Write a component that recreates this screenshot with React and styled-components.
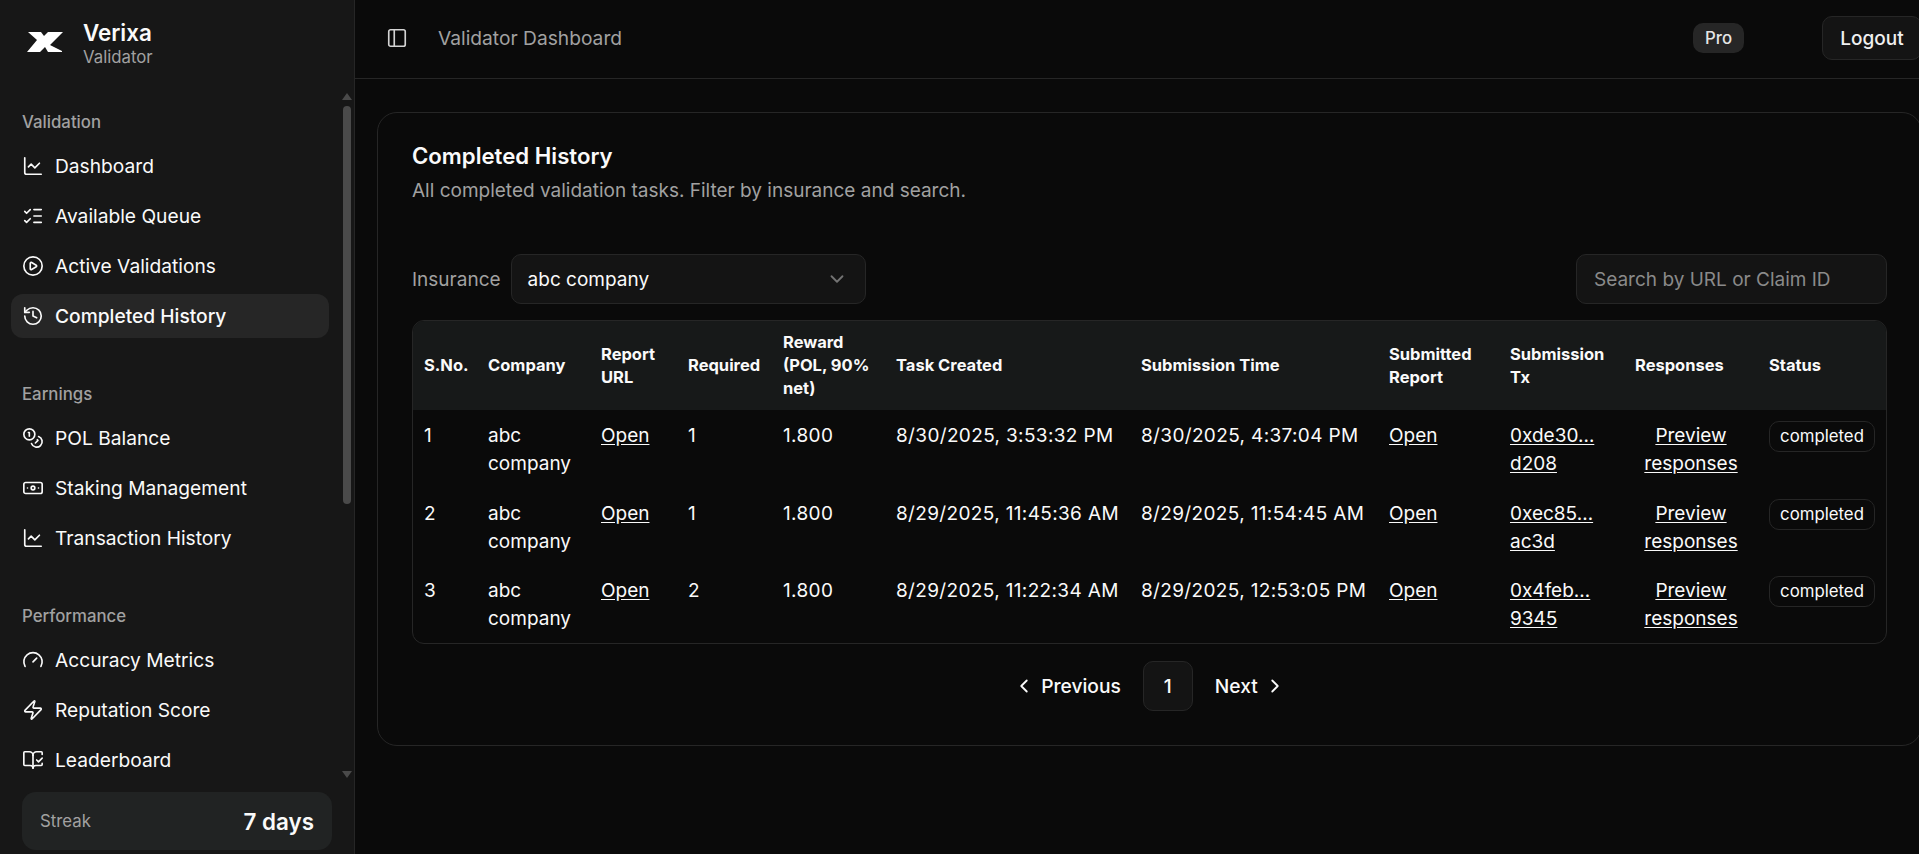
import styled, { createGlobalStyle } from "styled-components"
import {
    ChartLine,
    ListChecks,
    CirclePlay,
    History,
    Coins,
    Banknote,
    Gauge,
    Zap,
    BookOpenCheck,
    PanelLeft,
    ChevronDown,
    ChevronLeft,
    ChevronRight,
} from "lucide-react"

const GlobalStyle = createGlobalStyle`
    html, body {
        margin: 0;
        height: 100%;
        overflow: hidden;
        background: #0a0a0a;
    }
    * {
        box-sizing: border-box;
    }
    body {
        font-family: Inter, "Liberation Sans", sans-serif;
        color: #fafafa;
    }
`;

const Page = styled.div`
    display: flex;
    width: 1922px;
    height: 854px;
    background: #0a0a0a;
`;

const Sidebar = styled.aside`
    position: relative;
    flex: none;
    width: 355px;
    height: 854px;
    display: flex;
    flex-direction: column;
    background: #171717;
    border-right: 1px solid #262626;
`;
const Brand = styled.div`
    flex: none;
    height: 78px;
    padding: 16px 0 0 27px;
    display: flex;
    align-items: flex-start;
    gap: 20px;
`;
const LogoMark = styled.svg`
    flex: none;
    margin-top: 16px;
`;
const BrandText = styled.div`
    display: flex;
    flex-direction: column;
    padding-top: 3px;
`;
const BrandName = styled.div`
    font-size: 22.4px;
    line-height: 28px;
    font-weight: 600;
`;
const BrandRole = styled.div`
    font-size: 16.8px;
    line-height: 21px;
    color: #a1a1a1;
`;
const Nav = styled.nav`
    flex: 1;
    min-height: 0;
    overflow: hidden;
    margin-top: 22px;
    padding: 0 25px 0 11px;
`;
const Group = styled.div`
    display: flex;
    flex-direction: column;
    margin-bottom: 28px;
`;
const GroupLabel = styled.div`
    height: 44px;
    padding: 0 0 0 11px;
    display: flex;
    align-items: center;
    font-size: 16.8px;
    font-weight: 500;
    color: #a1a1a1;
`;
const NavItem = styled.a`
    flex: none;
    height: 44px;
    margin-bottom: 6px;
    padding: 0 11px;
    display: flex;
    align-items: center;
    gap: 11px;
    border-radius: 12px;
    font-size: 19.2px;
    font-weight: ${({ $active }) => ($active ? 500 : 400)};
    color: #fafafa;
    background: ${({ $active }) => ($active ? "#262626" : "transparent")};

    svg {
        flex: none;
    }
`;
const ScrollBar = styled.div`
    position: absolute;
    top: 93px;
    left: 342px;
    width: 10px;
    height: 685px;
    display: flex;
    flex-direction: column;
    align-items: center;
`;
const ScrollArrow = styled.div`
    flex: none;
    width: 0;
    height: 0;
    border-left: 5px solid transparent;
    border-right: 5px solid transparent;
    ${({ $down }) => ($down ? "border-top: 7px solid #4a4a4a;" : "border-bottom: 7px solid #4a4a4a;")}
`;
const ScrollThumb = styled.div`
    flex: none;
    width: 8px;
    height: 398px;
    margin-top: 6px;
    margin-bottom: auto;
    border-radius: 4px;
    background: #4a4a4a;
`;
const Streak = styled.div`
    flex: none;
    margin: 10px 22px 4px 22px;
    height: 58px;
    padding: 0 18px;
    display: flex;
    align-items: center;
    justify-content: space-between;
    border-radius: 14px;
    background: #212323;
`;
const StreakLabel = styled.div`
    font-size: 16.8px;
    color: #a1a1a1;
`;
const StreakValue = styled.div`
    font-size: 22.4px;
    font-weight: 600;
`;

const Main = styled.main`
    flex: 1;
    min-width: 0;
    display: flex;
    flex-direction: column;
`;
const Header = styled.header`
    flex: none;
    height: 79px;
    padding: 0 0 2px 31px;
    display: flex;
    align-items: center;
    border-bottom: 1px solid #262626;
    color: #a1a1a1;

    svg {
        color: #d4d4d4;
        flex: none;
    }
`;
const HeaderTitle = styled.div`
    margin-left: 30px;
    font-size: 19.2px;
    flex: 1;
`;
const ProBadge = styled.div`
    width: 51px;
    height: 30px;
    display: flex;
    align-items: center;
    justify-content: center;
    border-radius: 10px;
    background: #262626;
    font-size: 16.8px;
    font-weight: 500;
    color: #e5e5e5;
`;
const LogoutButton = styled.button`
    margin-left: 78px;
    width: 100px;
    height: 44px;
    padding: 0;
    border: 1px solid #262626;
    border-radius: 10px;
    background: #141414;
    color: #f0f0f0;
    font: 500 19px Inter, sans-serif;
`;

const Content = styled.div`
    padding: 33px 0 0 22px;
`;
const Card = styled.section`
    height: 634px;
    padding: 29px 34px 30px;
    border: 1px solid #262626;
    border-radius: 20px;
    background: #0a0a0a;
`;
const Title = styled.h2`
    margin: 0;
    font-size: 22.2px;
    line-height: 28px;
    font-weight: 600;
`;
const Desc = styled.div`
    margin-top: 7px;
    font-size: 19px;
    line-height: 28px;
    color: #a1a1a1;
`;
const Filters = styled.div`
    margin-top: 49px;
    display: flex;
    align-items: center;
    justify-content: space-between;
`;
const FilterLeft = styled.div`
    display: flex;
    align-items: center;
    gap: 10px;
`;
const FilterLabel = styled.div`
    font-size: 19px;
    color: #a1a1a1;
`;
const Select = styled.div`
    width: 355px;
    height: 50px;
    padding: 0 17px 0 16px;
    display: flex;
    align-items: center;
    justify-content: space-between;
    border: 1px solid #262626;
    border-radius: 10px;
    background: #141414;
    font-size: 19px;

    svg {
        color: #737373;
    }
`;
const SearchInput = styled.input`
    width: 311px;
    height: 50px;
    padding: 0 17px;
    border: 1px solid #262626;
    border-radius: 10px;
    background: #141414;
    color: #fafafa;
    font: 400 19px Inter, sans-serif;

    &::placeholder {
        color: #8a8a8a;
    }
`;

const TableWrap = styled.div`
    margin-top: 16px;
    border: 1px solid #262626;
    border-radius: 12px;
    overflow: hidden;
`;
const Table = styled.table`
    width: 100%;
    table-layout: fixed;
    border-collapse: collapse;
`;
const Col = styled.col`
    width: ${({ $w }) => $w}px;
`;
const Th = styled.th`
    height: 89px;
    padding: 0 11px;
    background: #171919;
    text-align: left;
    font-size: 16.5px;
    line-height: 23px;
    font-weight: 700;
`;
const Td = styled.td`
    height: 77.5px;
    padding: 12px 11px 0;
    vertical-align: top;
    font-size: 19px;
    line-height: 28px;
    text-align: ${({ $center }) => ($center ? "center" : "left")};
    letter-spacing: ${({ $spaced }) => ($spaced ? "0.35px" : "normal")};
`;
const Link = styled.a`
    color: #fafafa;
    text-decoration: underline;
    text-underline-offset: 2px;
`;
const StatusBadge = styled.span`
    display: block;
    width: 106px;
    height: 31px;
    margin-top: -1px;
    text-align: center;
    line-height: 29px;
    border: 1px solid #262626;
    border-radius: 10px;
    font-size: 16.8px;
    font-weight: 400;
`;

const Pagination = styled.div`
    margin-top: 17px;
    display: flex;
    justify-content: center;
    align-items: center;
    gap: 8px;
`;
const PageLink = styled.a`
    height: 50px;
    padding: 0 14px;
    display: flex;
    align-items: center;
    gap: 6px;
    font-size: 19.2px;
    font-weight: 500;
`;
const PageNumber = styled.div`
    width: 50px;
    height: 50px;
    display: flex;
    align-items: center;
    justify-content: center;
    border: 1px solid #262626;
    border-radius: 10px;
    background: #141414;
    font-size: 19.2px;
    font-weight: 500;
`;

const navGroups = [
    {
        label: "Validation",
        items: [
            { icon: ChartLine, text: "Dashboard" },
            { icon: ListChecks, text: "Available Queue" },
            { icon: CirclePlay, text: "Active Validations" },
            { icon: History, text: "Completed History", active: true },
        ],
    },
    {
        label: "Earnings",
        items: [
            { icon: Coins, text: "POL Balance" },
            { icon: Banknote, text: "Staking Management" },
            { icon: ChartLine, text: "Transaction History" },
        ],
    },
    {
        label: "Performance",
        items: [
            { icon: Gauge, text: "Accuracy Metrics" },
            { icon: Zap, text: "Reputation Score" },
            { icon: BookOpenCheck, text: "Leaderboard" },
        ],
    },
];

const columns = [
    { label: "S.No.", w: 64 },
    { label: "Company", w: 113 },
    { label: "Report URL", w: 87 },
    { label: "Required", w: 95 },
    { label: "Reward (POL, 90% net)", w: 113 },
    { label: "Task Created", w: 245 },
    { label: "Submission Time", w: 248 },
    { label: "Submitted Report", w: 121 },
    { label: "Submission Tx", w: 125 },
    { label: "Responses", w: 134 },
    { label: "Status", w: 128 },
];

const rows = [
    { id: 1, required: 1, created: "8/30/2025, 3:53:32 PM", submitted: "8/30/2025, 4:37:04 PM", tx: "0xde30… d208" },
    { id: 2, required: 1, created: "8/29/2025, 11:45:36 AM", submitted: "8/29/2025, 11:54:45 AM", tx: "0xec85… ac3d" },
    { id: 3, required: 2, created: "8/29/2025, 11:22:34 AM", submitted: "8/29/2025, 12:53:05 PM", tx: "0x4feb… 9345" },
];

const Logo = () => (
    <LogoMark width="36" height="20" viewBox="0 0 36 20">
        <path d="M1 0H14L17 4L21 0H36L23 13L35 19V20H21L18 15L13 20H0L10 8Z" fill="#fff" />
    </LogoMark>
);

const App = () => {
    return (
        <Page>
            <GlobalStyle />
            <Sidebar>
                <Brand>
                    <Logo />
                    <BrandText>
                        <BrandName>Verixa</BrandName>
                        <BrandRole>Validator</BrandRole>
                    </BrandText>
                </Brand>
                <Nav>
                    {navGroups.map((group) => (
                        <Group key={group.label}>
                            <GroupLabel>{group.label}</GroupLabel>
                            {group.items.map(({ icon: Icon, text, active }) => (
                                <NavItem key={text} $active={active}>
                                    <Icon size={22} strokeWidth={1.8} />
                                    {text}
                                </NavItem>
                            ))}
                        </Group>
                    ))}
                </Nav>
                <ScrollBar>
                    <ScrollArrow />
                    <ScrollThumb />
                    <ScrollArrow $down />
                </ScrollBar>
                <Streak>
                    <StreakLabel>Streak</StreakLabel>
                    <StreakValue>7 days</StreakValue>
                </Streak>
            </Sidebar>
            <Main>
                <Header>
                    <PanelLeft size={22} strokeWidth={1.8} />
                    <HeaderTitle>Validator Dashboard</HeaderTitle>
                    <ProBadge>Pro</ProBadge>
                    <LogoutButton>Logout</LogoutButton>
                </Header>
                <Content>
                    <Card>
                        <Title>Completed History</Title>
                        <Desc>All completed validation tasks. Filter by insurance and search.</Desc>
                        <Filters>
                            <FilterLeft>
                                <FilterLabel>Insurance</FilterLabel>
                                <Select>
                                    abc company
                                    <ChevronDown size={22} />
                                </Select>
                            </FilterLeft>
                            <SearchInput placeholder="Search by URL or Claim ID" />
                        </Filters>
                        <TableWrap>
                            <Table>
                                <colgroup>
                                    {columns.map((col) => (
                                        <Col key={col.label} $w={col.w} />
                                    ))}
                                </colgroup>
                                <thead>
                                    <tr>
                                        {columns.map((col) => (
                                            <Th key={col.label}>{col.label}</Th>
                                        ))}
                                    </tr>
                                </thead>
                                <tbody>
                                    {rows.map((row) => (
                                        <tr key={row.id}>
                                            <Td>{row.id}</Td>
                                            <Td>abc company</Td>
                                            <Td><Link>Open</Link></Td>
                                            <Td>{row.required}</Td>
                                            <Td $spaced>1.800</Td>
                                            <Td $spaced>{row.created}</Td>
                                            <Td $spaced>{row.submitted}</Td>
                                            <Td><Link>Open</Link></Td>
                                            <Td><Link>{row.tx}</Link></Td>
                                            <Td $center><Link>Preview responses</Link></Td>
                                            <Td><StatusBadge>completed</StatusBadge></Td>
                                        </tr>
                                    ))}
                                </tbody>
                            </Table>
                        </TableWrap>
                        <Pagination>
                            <PageLink><ChevronLeft size={22} />Previous</PageLink>
                            <PageNumber>1</PageNumber>
                            <PageLink>Next<ChevronRight size={22} /></PageLink>
                        </Pagination>
                    </Card>
                </Content>
            </Main>
        </Page>
    )
}

export default App
